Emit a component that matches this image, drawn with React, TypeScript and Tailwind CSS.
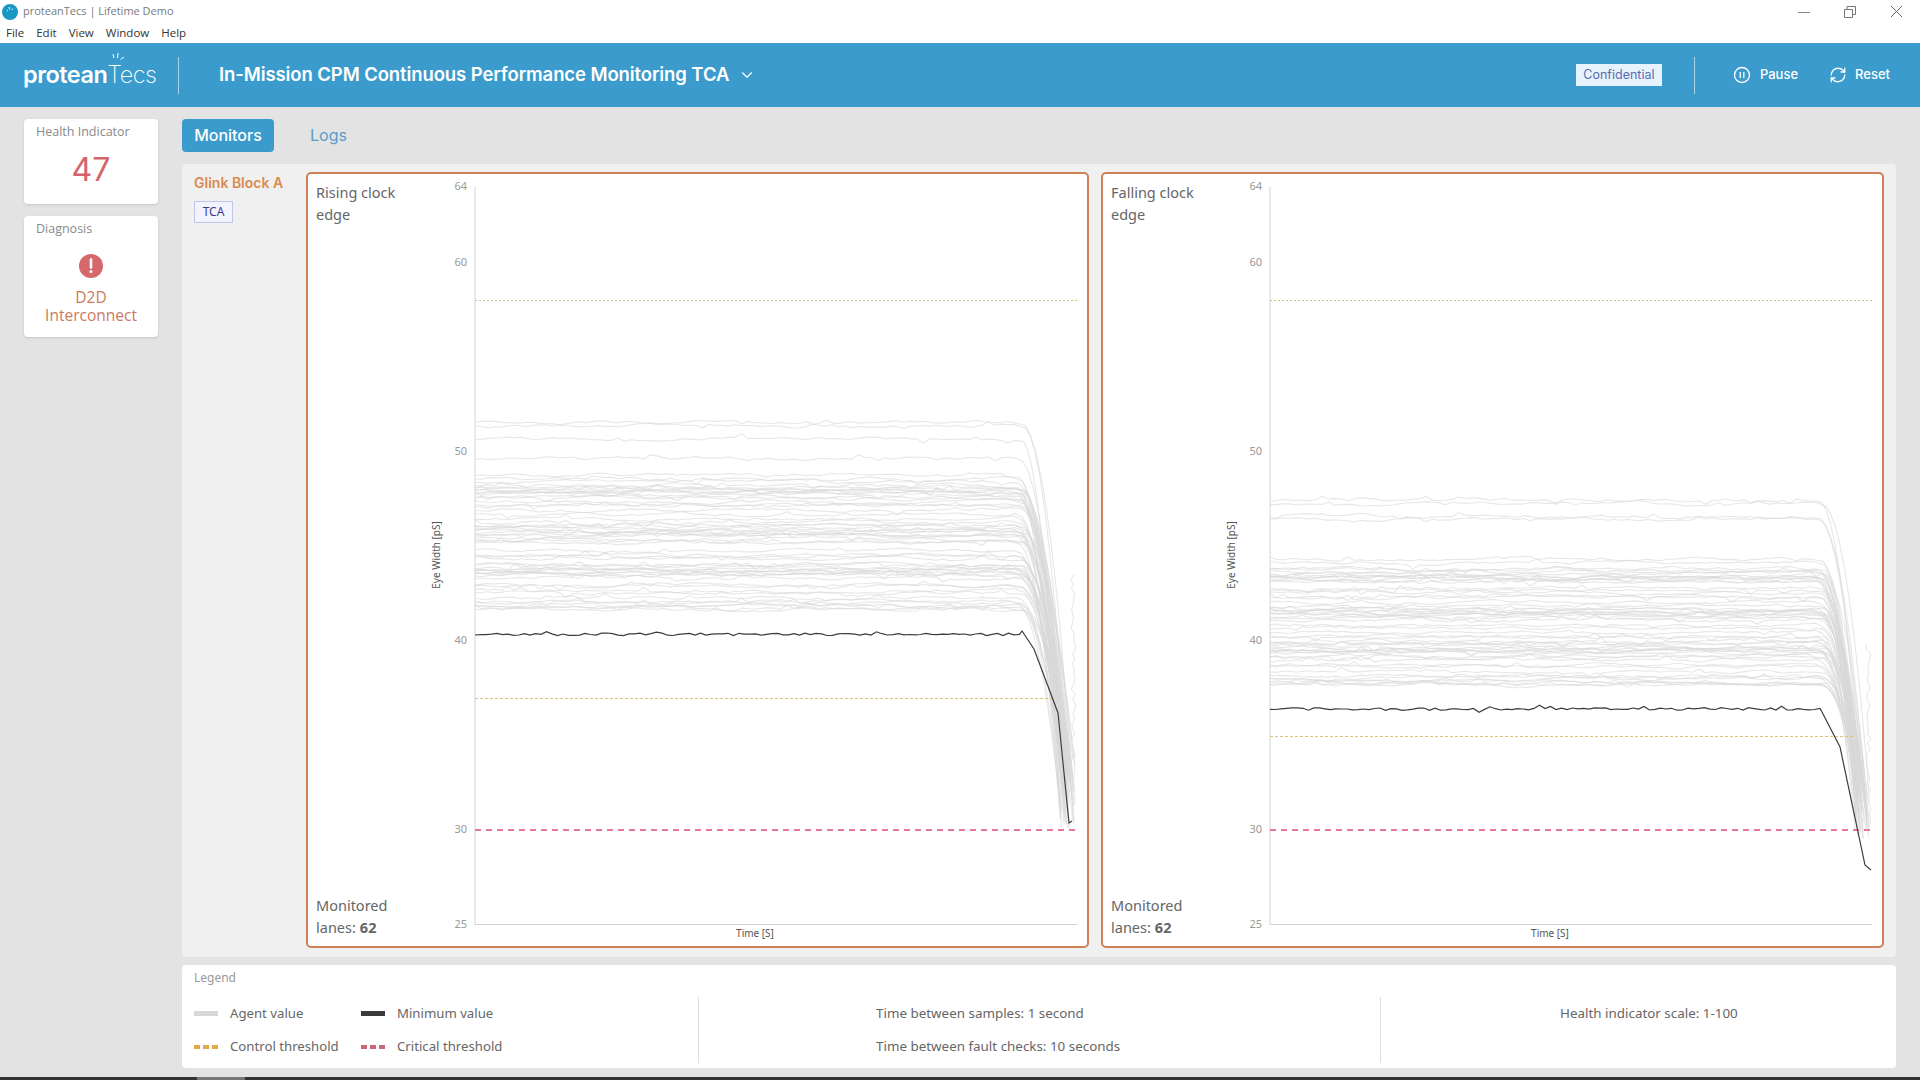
import { ChevronDown, RefreshCw } from "lucide-react";

// small seeded random so the traces stay the same every load
function makeRandom(seed: number) {
  let s = seed;
  return () => {
    s = (s + 0x6d2b79f5) | 0;
    let t = Math.imul(s ^ (s >>> 15), 1 | s);
    t = (t + Math.imul(t ^ (t >>> 7), 61 | t)) ^ t;
    return ((t ^ (t >>> 14)) >>> 0) / 4294967296;
  };
}

const AXIS_X = 35;
const toY = (v: number) => 640 - (v - 40) * 18.9 - 174;

function buildTraces(seed: number, levels: number[], fallAt: number, endMin: number, endMax: number) {
  const rand = makeRandom(seed);
  return levels.map((level) => {
    const fallX = fallAt + rand() * 8;
    const endX = 620 + rand() * 15;
    const endY = endMin + rand() * (endMax - endMin);
    const pts: string[] = [];
    let x = AXIS_X;
    let drift = 0;
    while (x < fallX) {
      drift = drift * 0.8 + (rand() - 0.5) * 2.4;
      const spike = rand() > 0.93 ? (rand() - 0.5) * 8 : 0;
      pts.push(`${x.toFixed(1)},${(toY(level) + drift + spike).toFixed(1)}`);
      x += 6.5;
    }
    for (let u = 0.1; u < 1; u += 0.1) {
      const fx = fallX + (endX - fallX) * u;
      const fy = toY(level) + (endY - toY(level)) * Math.pow(u, 2.1);
      pts.push(`${fx.toFixed(1)},${fy.toFixed(1)}`);
    }
    pts.push(`${endX.toFixed(1)},${endY.toFixed(1)}`);
    return pts.join(" ");
  });
}

// levels bunch up in bands instead of being evenly spread
function buildLevels(seed: number, top: number[], high: number, low: number, count: number) {
  const rand = makeRandom(seed);
  const list = [...top];
  for (let i = 0; i < count; i++) {
    const u = (i + rand() * 1.6) / count;
    const bunched = u + Math.sin(u * 22) * 0.028;
    list.push(high - (high - low) * bunched);
  }
  return list;
}

function minLine(seed: number, level: number, tail: [number, number][]) {
  const rand = makeRandom(seed);
  const pts: string[] = [];
  for (let x = AXIS_X; x < tail[0][0]; x += 5.5) {
    const spike = rand() > 0.9 ? (rand() - 0.5) * 6 : 0;
    pts.push(`${x.toFixed(1)},${(toY(level) + (rand() - 0.5) * 2.6 + spike).toFixed(1)}`);
  }
  tail.forEach(([x, y]) => pts.push(`${x},${y}`));
  return pts.join(" ");
}

// the faint jagged strip along the right end of the traces
function edgeStrip(seed: number, from: number, to: number) {
  const rand = makeRandom(seed);
  const pts: string[] = [];
  for (let y = from; y < to; y += 5) {
    pts.push(`${(631 + rand() * 5).toFixed(1)},${y}`);
  }
  return pts.join(" ");
}

const charts = [
  {
    title: "Rising clock edge",
    levels: buildLevels(11, [51.5, 51.35, 50.65, 49.6], 48.9, 41.6, 58),
    fallAt: 574,
    traceEnd: [585, 655] as [number, number],
    strip: edgeStrip(3, 400, 640),
    min: minLine(5, 40.3, [[582, 457], [594, 475], [618, 539], [629, 649], [632, 647]]),
    lower: 524,
    lowerEnd: 613,
  },
  {
    title: "Falling clock edge",
    levels: buildLevels(23, [47.4, 47.2, 46.55, 46.4], 44.3, 37.6, 58),
    fallAt: 581,
    traceEnd: [600, 665] as [number, number],
    strip: edgeStrip(7, 470, 660),
    min: minLine(8, 36.35, [[587, 538], [605, 573], [630, 691], [636, 696]]),
    lower: 562,
    lowerEnd: 620,
  },
];

const ticks = [64, 60, 50, 40, 30, 25];

function Chart({ chart }: { chart: (typeof charts)[number] }) {
  const traces = buildTraces(chart.lower, chart.levels, chart.fallAt, chart.traceEnd[0], chart.traceEnd[1]);
  return (
    <div className="flex h-full w-[783px] rounded-[5px] border-2 border-[#d08058] bg-white">
      <div className="flex w-[112px] shrink-0 flex-col justify-between pl-2 pt-[7px] pb-2 text-[14.5px] leading-[22px] text-[#666]">
        <div className="w-[90px]">{chart.title}</div>
        <div>
          <div>Monitored</div>
          <div className="flex gap-1">
            <span>lanes:</span>
            <span className="font-bold">62</span>
          </div>
        </div>
      </div>
      <svg width="667" height="772" className="shrink-0 font-['Noto_Sans',sans-serif]">
        <g transform="translate(20 0)">
          {ticks.map((t) => (
            <text key={t} x="27" y={toY(t) + 4} textAnchor="end" fontSize="11" fill="#999">
              {t}
            </text>
          ))}
          <text transform="translate(0 381) rotate(-90)" textAnchor="middle" fontSize="10" fill="#555">
            Eye Width [pS]
          </text>
          <text x="315" y="763" textAnchor="middle" fontSize="10" fill="#555">
            Time [S]
          </text>
          <line x1={AXIS_X} y1="13" x2={AXIS_X} y2="751" stroke="#d4d4d4" />
          <line x1={AXIS_X} y1="750.5" x2="637" y2="750.5" stroke="#d4d4d4" />
          {traces.map((points, i) => (
            <polyline key={i} points={points} fill="none" stroke="#d8d8d8" strokeOpacity="0.62" strokeWidth="1.1" />
          ))}
          <polyline points={chart.strip} fill="none" stroke="#e6e6e6" strokeWidth="1" />
          <line x1={AXIS_X} y1="126.5" x2="637" y2="126.5" stroke="#cbc377" strokeDasharray="2 2" />
          <line x1={AXIS_X} y1={chart.lower + 0.5} x2={chart.lowerEnd} y2={chart.lower + 0.5} stroke="#d9c377" strokeDasharray="3 2" />
          <line x1={AXIS_X} y1="656" x2="636" y2="656" stroke="#e4779a" strokeWidth="1.800" strokeDasharray="6 5" />
          <polyline points={chart.min} fill="none" stroke="#3c3c3c" strokeWidth="1.2" />
        </g>
      </svg>
    </div>
  );
}

function LegendItem({ swatch, label }: { swatch: React.ReactNode; label: string }) {
  return (
    <div className="flex h-[33px] items-center gap-3 whitespace-nowrap">
      {swatch}
      <span>{label}</span>
    </div>
  );
}

function Dashes({ color }: { color: string }) {
  return (
    <span className="flex w-6 justify-between">
      <span className={`h-[4px] w-[6px] ${color}`} />
      <span className={`h-[4px] w-[6px] ${color}`} />
      <span className={`h-[4px] w-[6px] ${color}`} />
    </span>
  );
}

export default function App() {
  return (
    <div className="flex h-[1080px] w-[1920px] flex-col overflow-hidden bg-[#e3e3e3] font-['Noto_Sans',sans-serif]">
      {/* window chrome */}
      <div className="h-[43px] shrink-0 bg-white font-['Open_Sans',sans-serif]">
        <div className="flex h-[23px] items-center justify-between text-[11px]">
          <div className="flex items-center">
            <svg width="16" height="16" viewBox="0 0 16 16" className="ml-[2px] mr-[5px]">
              <circle cx="8" cy="8" r="8" fill="#1b97c6" />
              <path d="M7 3l.6 2.5M11 4.500l-1.500 1.500M5 6.500l1 .5" stroke="#fff" strokeWidth="1" />
            </svg>
            <span className="text-[#7a7a7a]">proteanTecs | Lifetime Demo</span>
          </div>
          <div className="flex items-center gap-[34px] pr-[17px]">
            <svg width="12" height="12" viewBox="0 0 12 12">
              <path d="M0 6.500h12" stroke="#888" />
            </svg>
            <svg width="12" height="12" viewBox="0 0 12 12" fill="none" stroke="#777">
              <path d="M.5 3.500h8v8h-8zM3 3.500V.5h8.500v8H8.500" />
            </svg>
            <svg width="13" height="13" viewBox="0 0 13 13" stroke="#666">
              <path d="M1 1l11 11M12 1L1 12" />
            </svg>
          </div>
        </div>
        <div className="flex h-[20px] items-center gap-[12px] pl-[6px] text-[11.5px] text-[#333]">
          <span>File</span>
          <span>Edit</span>
          <span>View</span>
          <span>Window</span>
          <span>Help</span>
        </div>
      </div>

      {/* header */}
      <header className="flex h-[64px] shrink-0 items-center bg-[#3a9bcc] text-white font-['Inter',sans-serif]">
        <div className="relative ml-[23px] flex w-[155px] items-baseline text-[23.5px] leading-none tracking-[-0.5px]">
          <span className="font-semibold">protean</span>
          <span className="font-extralight">Tecs</span>
          <svg width="14" height="10" viewBox="0 0 14 10" className="absolute left-[89px] top-[-10px]" stroke="#fff" strokeWidth="1">
            <path d="M1 1l1 4M6 0l-.5 5M12 4l-3.500 2.500" />
          </svg>
        </div>
        <div className="h-[37px] w-px bg-[#a8d4ea]" />
        <div className="ml-[40px] flex items-center gap-[9px] text-[18.5px] font-semibold tracking-[-0.1px]">
          In-Mission CPM Continuous Performance Monitoring TCA
          <ChevronDown size={18} strokeWidth={1.5} />
        </div>
        <div className="ml-auto flex items-center">
          <div className="flex h-[22px] w-[86px] items-center justify-center bg-[#e6f3fc] text-[12.5px] text-[#5a6bb5]">
            Confidential
          </div>
          <div className="ml-[32px] h-[37px] w-px bg-[#a8d4ea]" />
          <svg width="18" height="18" viewBox="0 0 18 18" fill="none" stroke="#fff" strokeWidth="1.3" className="ml-[38px]">
            <circle cx="9" cy="9" r="7.500" />
            <path d="M7.200 6v6M10.800 6v6" />
          </svg>
          <span className="ml-[9px] text-[13px] font-medium">Pause</span>
          <RefreshCw size={18} strokeWidth={1.7} className="ml-[31px]" />
          <span className="ml-[8px] mr-[30px] text-[13px] font-medium">Reset</span>
        </div>
      </header>

      <div className="flex min-h-0 flex-1 pt-3">
        {/* left cards */}
        <aside className="flex w-[182px] shrink-0 flex-col gap-3 pl-6 font-['Open_Sans',sans-serif]">
          <div className="h-[85px] w-[134px] rounded bg-white px-3 pt-1 shadow-sm">
            <div className="text-[12.500px] leading-[18px] text-[#8a8a8a]">Health Indicator</div>
            <div className="mt-[10px] text-center font-['Inter',sans-serif] text-[32px] font-normal leading-[38px] text-[#d4646b]">47</div>
          </div>
          <div className="h-[121px] w-[134px] rounded bg-white pt-1 shadow-sm">
            <div className="px-3 text-[12.500px] leading-[18px] text-[#8a8a8a]">Diagnosis</div>
            <div className="mt-4 flex justify-center">
              <svg width="24" height="24" viewBox="0 0 24 24">
                <circle cx="12" cy="12" r="12" fill="#d4686a" />
                <path d="M12 5.500v8" stroke="#fff" strokeWidth="2.600" strokeLinecap="round" />
                <circle cx="12" cy="17.500" r="1.500" fill="#fff" />
              </svg>
            </div>
            <div className="mt-[10px] flex flex-col items-center text-[15.500px] text-[#cb7a60]">
              <span className="h-[18px] leading-[18px]">D2D</span>
              <span className="h-[18px] leading-[18px]">Interconnect</span>
            </div>
          </div>
        </aside>

        <main className="flex w-[1714px] flex-col">
          {/* tabs */}
          <div className="flex h-[33px] shrink-0 items-center gap-[36px] font-['Inter',sans-serif] text-[16px]">
            <div className="flex h-full w-[92px] items-center justify-center rounded-sm bg-[#3a9bcc] pb-px font-medium text-white">Monitors</div>
            <div className="pb-px text-[#5b9bc9]">Logs</div>
          </div>

          {/* charts panel */}
          <section className="mt-3 flex h-[793px] shrink-0 rounded-sm bg-[#f0f0f0] pt-2 pb-[9px]">
            <div className="w-[124px] shrink-0 pl-3 pt-[2px]">
              <div className="font-['Inter',sans-serif] text-[14px] font-semibold leading-[18px] text-[#d98a4f]">Glink Block A</div>
              <div className="mt-[9px] flex h-[22px] w-[39px] items-center justify-center border border-[#c5c5ea] bg-[#f3f3fd] text-[12px] text-[#3b3b8c]">TCA</div>
            </div>
            <div className="flex h-full gap-3">
              {charts.map((c) => (
                <Chart key={c.title} chart={c} />
              ))}
            </div>
          </section>

          {/* legend */}
          <section className="mt-2 h-[103px] shrink-0 rounded-sm bg-white text-[13.4px] text-[#666]">
            <div className="px-3 pt-1 text-[12px] leading-[18px] text-[#999]">Legend</div>
            <div className="mt-[10px] flex">
              <div className="grid w-[516px] shrink-0 grid-cols-[167px_1fr] pl-3 text-[13.2px]">
                <LegendItem swatch={<span className="h-[5px] w-6 bg-[#d8d8d8]" />} label="Agent value" />
                <LegendItem swatch={<span className="h-[5px] w-6 bg-[#3a3a3a]" />} label="Minimum value" />
                <LegendItem swatch={<Dashes color="bg-[#e0aa45]" />} label="Control threshold" />
                <LegendItem swatch={<Dashes color="bg-[#c9687a]" />} label="Critical threshold" />
              </div>
              <div className="flex w-[682px] shrink-0 flex-col border-l border-[#dedede] pl-[177px]">
                <div className="flex h-[33px] items-center">Time between samples: 1 second</div>
                <div className="flex h-[33px] items-center">Time between fault checks: 10 seconds</div>
              </div>
              <div className="border-l border-[#dedede] pl-[179px]">
                <div className="flex h-[33px] items-center whitespace-nowrap">Health indicator scale: 1-100</div>
              </div>
            </div>
          </section>
        </main>
      </div>

      <div className="mt-[9px] flex h-[3px] shrink-0 bg-[#333]">
        <div className="ml-[197px] h-full w-[48px] bg-[#777]" />
      </div>
    </div>
  );
}
